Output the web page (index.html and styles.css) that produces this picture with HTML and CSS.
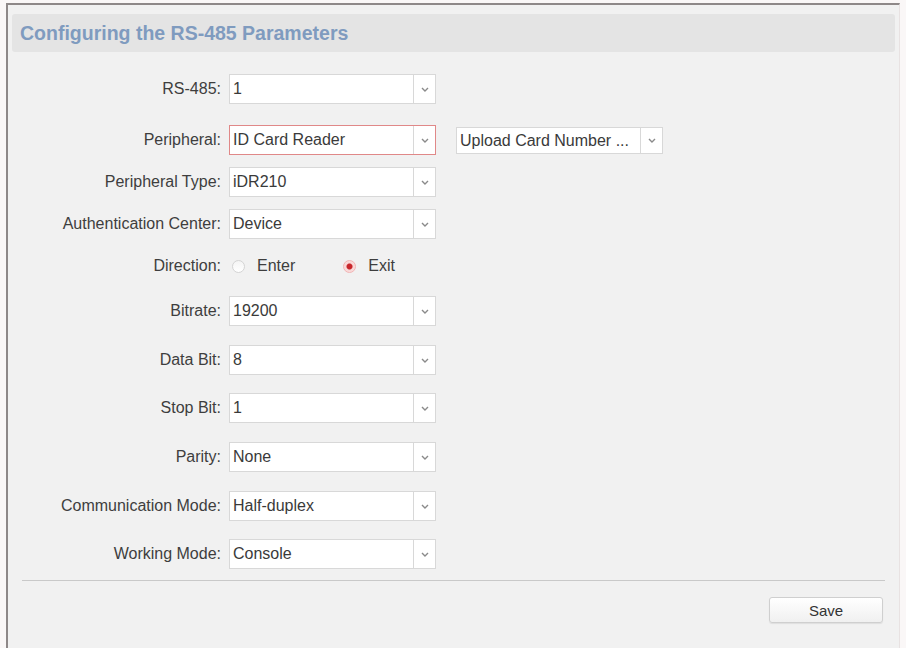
FILE: index.html
```html
<!DOCTYPE html>
<html>
	<head>
		<meta charset="UTF-8">
		<title>RS-485 Parameters</title>
		<link rel="stylesheet" href="styles.css">
	</head>
	<body>
		<div class="panel">
			<!--标题栏-->
			<div class="header">Configuring the RS-485 Parameters</div>

			<!--表单-->
			<div class="form">
				<div class="row first">
					<span class="label">RS-485:</span>
					<div class="select"><span class="value">1</span><span class="arrow"><svg width="8" height="5" viewBox="0 0 8 5"><path d="M1 1l3 3 3-3" fill="none" stroke="#8a8a8a" stroke-width="1.4"/></svg></span></div>
				</div>
				<div class="row wide">
					<span class="label">Peripheral:</span>
					<div class="select focus"><span class="value">ID Card Reader</span><span class="arrow"><svg width="8" height="5" viewBox="0 0 8 5"><path d="M1 1l3 3 3-3" fill="none" stroke="#8a8a8a" stroke-width="1.4"/></svg></span></div>
					<div class="select small"><span class="value">Upload Card Number ...</span><span class="arrow"><svg width="8" height="5" viewBox="0 0 8 5"><path d="M1 1l3 3 3-3" fill="none" stroke="#8a8a8a" stroke-width="1.4"/></svg></span></div>
				</div>
				<div class="row near">
					<span class="label">Peripheral Type:</span>
					<div class="select"><span class="value">iDR210</span><span class="arrow"><svg width="8" height="5" viewBox="0 0 8 5"><path d="M1 1l3 3 3-3" fill="none" stroke="#8a8a8a" stroke-width="1.4"/></svg></span></div>
				</div>
				<div class="row near">
					<span class="label">Authentication Center:</span>
					<div class="select"><span class="value">Device</span><span class="arrow"><svg width="8" height="5" viewBox="0 0 8 5"><path d="M1 1l3 3 3-3" fill="none" stroke="#8a8a8a" stroke-width="1.4"/></svg></span></div>
				</div>
				<div class="row near">
					<span class="label">Direction:</span>
					<div class="radios">
						<span class="radio"></span><span class="radio-text">Enter</span>
						<span class="radio checked"></span><span class="radio-text">Exit</span>
					</div>
				</div>
				<div class="row mid">
					<span class="label">Bitrate:</span>
					<div class="select"><span class="value">19200</span><span class="arrow"><svg width="8" height="5" viewBox="0 0 8 5"><path d="M1 1l3 3 3-3" fill="none" stroke="#8a8a8a" stroke-width="1.4"/></svg></span></div>
				</div>
				<div class="row">
					<span class="label">Data Bit:</span>
					<div class="select"><span class="value">8</span><span class="arrow"><svg width="8" height="5" viewBox="0 0 8 5"><path d="M1 1l3 3 3-3" fill="none" stroke="#8a8a8a" stroke-width="1.4"/></svg></span></div>
				</div>
				<div class="row snug">
					<span class="label">Stop Bit:</span>
					<div class="select"><span class="value">1</span><span class="arrow"><svg width="8" height="5" viewBox="0 0 8 5"><path d="M1 1l3 3 3-3" fill="none" stroke="#8a8a8a" stroke-width="1.4"/></svg></span></div>
				</div>
				<div class="row">
					<span class="label">Parity:</span>
					<div class="select"><span class="value">None</span><span class="arrow"><svg width="8" height="5" viewBox="0 0 8 5"><path d="M1 1l3 3 3-3" fill="none" stroke="#8a8a8a" stroke-width="1.4"/></svg></span></div>
				</div>
				<div class="row">
					<span class="label">Communication Mode:</span>
					<div class="select"><span class="value">Half-duplex</span><span class="arrow"><svg width="8" height="5" viewBox="0 0 8 5"><path d="M1 1l3 3 3-3" fill="none" stroke="#8a8a8a" stroke-width="1.4"/></svg></span></div>
				</div>
				<div class="row snug">
					<span class="label">Working Mode:</span>
					<div class="select"><span class="value">Console</span><span class="arrow"><svg width="8" height="5" viewBox="0 0 8 5"><path d="M1 1l3 3 3-3" fill="none" stroke="#8a8a8a" stroke-width="1.4"/></svg></span></div>
				</div>
			</div>

			<!--底部按钮-->
			<div class="footer">
				<button class="btn">Save</button>
			</div>
		</div>
	</body>
</html>
```
FILE: styles.css
```css
* {
	margin: 0;
	padding: 0;
	box-sizing: border-box;
}

body {
	background-color: #faf7f7;
	font-family: "Liberation Sans", Arial, sans-serif;
	color: #3a3a3a;
	padding-top: 3px;
	overflow: hidden;
}

.panel {
	margin-left: 6px;
	width: 894px;
	height: 645px;
	background-color: #f1f1f1;
	border-top: 2px solid #8e8888;
	border-left: 2px solid #8e8888;
	border-right: 1px solid #e8e2e2;
	padding: 9px 4px 0 4px;
}

.header {
	height: 38px;
	line-height: 38px;
	padding-left: 8px;
	background-color: #e4e4e4;
	border-radius: 3px;
	font-size: 19.5px;
	font-weight: bold;
	color: #7f9bbf;
}

.form {
	padding-top: 3px;
}

.row {
	display: flex;
	align-items: center;
	height: 30px;
	margin-top: 19px;
}

.row.wide {
	margin-top: 21px;
}

.row.near {
	margin-top: 12px;
}

.row.mid {
	margin-top: 15px;
}

.row.snug {
	margin-top: 18px;
}

.label {
	width: 209px;
	margin-right: 8px;
	text-align: right;
	font-size: 16px;
	color: #3e3e3e;
}

.select {
	display: flex;
	width: 207px;
	height: 30px;
	background-color: #fff;
	border: 1px solid #d8d8d8;
}

.select.focus {
	border-color: #e08888;
}

.select.small {
	height: 27px;
	margin-left: 20px;
}

.value {
	flex: 1;
	padding-left: 3px;
	font-size: 16px;
	line-height: 28px;
	color: #3a3a3a;
	white-space: nowrap;
	overflow: hidden;
}

.select.small .value {
	line-height: 25px;
}

.arrow {
	width: 22px;
	border-left: 1px solid #d8d8d8;
	display: flex;
	align-items: center;
	justify-content: center;
}

.radios {
	display: flex;
	align-items: center;
	padding-left: 3px;
}

.radio {
	width: 13px;
	height: 13px;
	border-radius: 50%;
	border: 1px solid #d4d4d4;
	background: linear-gradient(#f4f4f4, #ffffff);
}

.radio.checked {
	border-color: #f2b4b4;
	background: radial-gradient(circle, #c8262b 0, #c8262b 2.5px, #f8d4d4 3.5px, #fbe6e6 100%);
}

.radio-text {
	margin-left: 12px;
	margin-right: 48px;
	font-size: 16px;
	color: #3e3e3e;
}

.footer {
	margin: 11px 10px 0 10px;
	border-top: 1px solid #c9c9c9;
	display: flex;
	justify-content: flex-end;
	padding-top: 16px;
	padding-right: 2px;
}

.btn {
	width: 114px;
	height: 26px;
	font-family: "Liberation Sans", Arial, sans-serif;
	font-size: 15px;
	color: #333;
	border: 1px solid #cfcfcf;
	border-radius: 3px;
	background: linear-gradient(#ffffff, #f0f0f0);
	box-shadow: 0 1px 1px rgba(0, 0, 0, 0.08);
}
```
